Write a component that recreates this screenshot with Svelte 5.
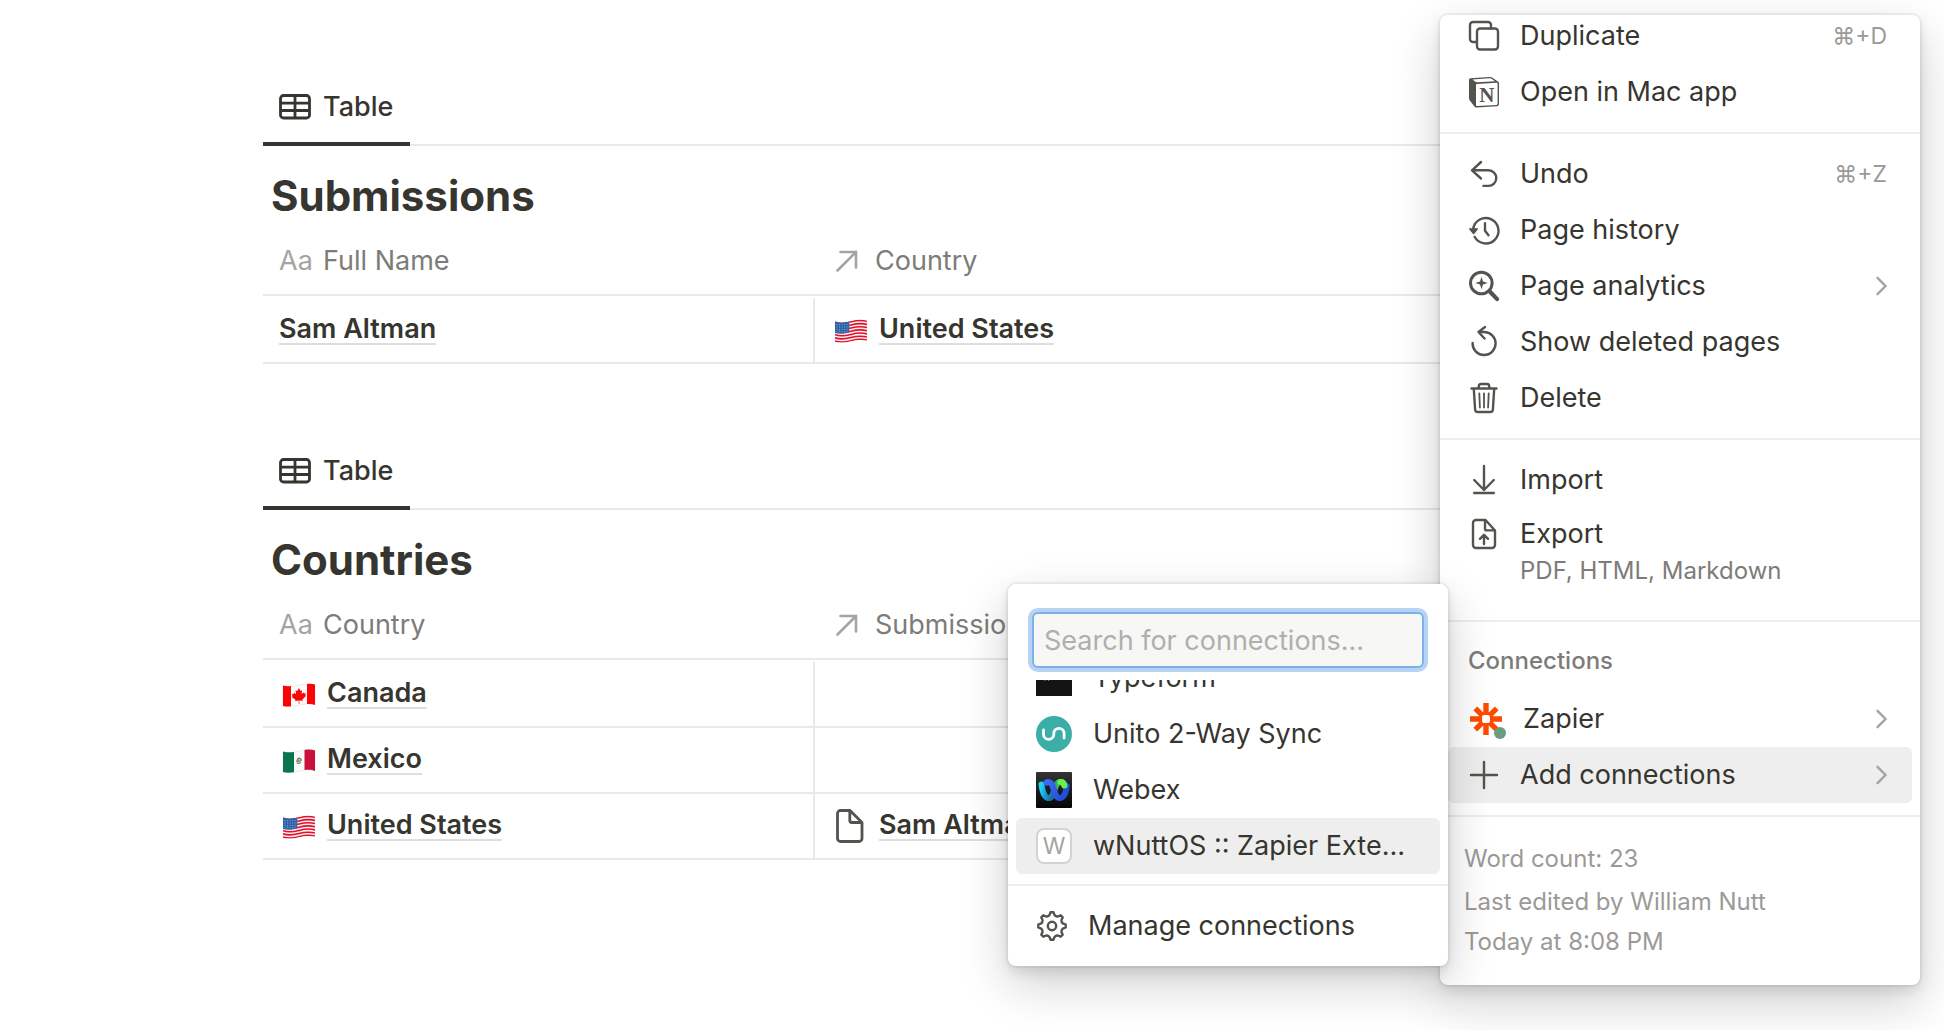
<script lang="ts">
  type Cell = { icon?: string; text: string };

  const sections: { title: string; columns: [string, string]; rows: { name: Cell; relation?: Cell }[] }[] = [
    {
      title: 'Submissions',
      columns: ['Full Name', 'Country'],
      rows: [{ name: { text: 'Sam Altman' }, relation: { icon: 'us', text: 'United States' } }]
    },
    {
      title: 'Countries',
      columns: ['Country', 'Submissions'],
      rows: [
        { name: { icon: 'ca', text: 'Canada' } },
        { name: { icon: 'mx', text: 'Mexico' } },
        { name: { icon: 'us', text: 'United States' }, relation: { icon: 'page', text: 'Sam Altman' } }
      ]
    }
  ];

  const groups: { icon: string; label: string; shortcut?: string; more?: boolean; note?: string }[][] = [
    [
      { icon: 'duplicate', label: 'Duplicate', shortcut: '⌘+D' },
      { icon: 'app', label: 'Open in Mac app' }
    ],
    [
      { icon: 'undo', label: 'Undo', shortcut: '⌘+Z' },
      { icon: 'history', label: 'Page history' },
      { icon: 'analytics', label: 'Page analytics', more: true },
      { icon: 'restore', label: 'Show deleted pages' },
      { icon: 'trash', label: 'Delete' }
    ],
    [
      { icon: 'import', label: 'Import' },
      { icon: 'export', label: 'Export', note: 'PDF, HTML, Markdown' }
    ]
  ];

  const apps = [
    { icon: 'typeform', label: 'Typeform' },
    { icon: 'unito', label: 'Unito 2-Way Sync' },
    { icon: 'webex', label: 'Webex' },
    { icon: 'letter', label: 'wNuttOS :: Zapier Extension' }
  ];

  let query = $state('');
  let selected = $state(3);

  const gear = (() => {
    const at = (r: number, deg: number) => {
      const a = (deg * Math.PI) / 180;
      return `${(15 + r * Math.sin(a)).toFixed(2)} ${(15 - r * Math.cos(a)).toFixed(2)}`;
    };
    let d = `M${at(13.8, -6)}`;
    for (let k = 0; k < 8; k++) {
      const c = k * 45;
      d += `L${at(13.8, c + 6)}L${at(11.2, c + 13)}Q${at(10, c + 22.5)} ${at(11.2, c + 32)}L${at(13.8, c + 39)}`;
    }
    return d + 'Z';
  })();
</script>

{#snippet flag(code: string)}
  <svg class="flag" viewBox="0 0 32 24" aria-hidden="true">
    {#if code === 'us'}
      <clipPath id="us-wave"><path d="M0 2.2C5 4 10 3.6 16 2S27 0 32 1.500V21.500C27 20.500 21 20.800 16 22.200S5 24 0 23Z" /></clipPath>
      <g clip-path="url(#us-wave)">
        <rect width="32" height="24" fill="#f6efef" />
        {#each [0, 1, 2, 3, 4, 5, 6] as i}
          <path d="M0 {3.100 + i * 3.150}C5 {4.800 + i * 3.150} 10 {4.400 + i * 3.150} 16 {2.800 + i * 3.150}S27 {0.900 + i * 3.150} 32 {2.300 + i * 3.150}" fill="none" stroke="#e3102c" stroke-width="1.600" />
        {/each}
        <path d="M0 2.200C5 4 9 3.500 14.200 2.300V13.500C9 14.500 5 15 0 14Z" fill="#2d64a8" />
        <path d="M1.500 5.500h12M1.500 8h12M1.500 10.500h12M1.500 12.700h11" stroke="#8fb2dc" stroke-width=".8" stroke-dasharray="1 1.500" />
      </g>
    {:else if code === 'ca'}
      <path d="M0 3C5 4.500 10 3.500 16 2S27 .500 32 1.500V21.500C27 20 21 21 16 22.200S5 24 0 23Z" fill="#fafafa" stroke="#ddd" stroke-width=".5" />
      <path d="M0 2.500C3 3.300 5.500 3.300 8 3V23.300C5 23.700 2.500 23.600 0 23ZM24 .900C27 .500 29.500.700 32 1.500V22C29 21 27 20.800 24 21Z" fill="#f90505" />
      <path d="m16 5-1.800 3-1.700-.5.600 3.800-2-1.600-.5 1.400-1.800-.1.800 2.200-.9.700 3.800 2.900-.4 1.300 3.600-.5.100 3.400h.6l-.1-3.500 3.500.3-.3-1.400 3.600-3.600-.9-.5.600-2.200-1.800.4-.6-1.200-1.700 1.900.3-3.900-1.500.8Z" fill="#f90505" />
    {:else}
      <path d="M0 3C5 4.500 10 3.500 16 2S27 .500 32 1.500V21.500C27 20 21 21 16 22.200S5 24 0 23Z" fill="#fafafa" stroke="#ddd" stroke-width=".5" />
      <path d="M0 2.500C4 3.500 7 3.500 11 3V23.200C7 23.800 3 23.800 0 23Z" fill="#0a7350" />
      <path d="M21.500 1C26 .200 29 .500 32 1.500V22C29 20.800 26 20.500 21.500 21.100Z" fill="#c8103a" />
      <path d="M14 13c0-2.500 1.200-4 2.700-3.600 1.300.4 1.500 1.500 1.100 2.600" fill="none" stroke="#9a6a3c" stroke-width="1.500" />
      <path d="M13.800 13.500c1.300 1.500 3.300 1 4-.8" fill="none" stroke="#3f9a78" stroke-width="1.200" />
      <circle cx="15.800" cy="12" r="1.200" fill="#5b9fc0" />
    {/if}
  </svg>
{/snippet}

{#snippet glyph(name: string)}
  <svg class="glyph" viewBox="0 0 30 30" aria-hidden="true">
    {#if name === 'duplicate'}
      <path d="M7.500 21H4a3 3 0 0 1-3-3V4a3 3 0 0 1 3-3h15a3 3 0 0 1 3 3v3.500" />
      <rect x="8" y="7.500" width="21" height="21" rx="3" />
    {:else if name === 'app'}
      <path class="solid" d="M1.500 1.300 20.500 0c1.500-.1 2 .100 3 .8l5 3.400c1.300.8 1.500 1.200 1.500 2.500v20c0 1.600-.7 2.500-2.300 2.600L8 30.500c-1.300.1-2-.2-2.800-1.200l-4-5.300C.300 23 0 22.200 0 21V3c0-1 .4-1.600 1.500-1.700Z" />
      <path class="hollow" d="m3.500 2.400 16.800-1.200c1 0 1.500 0 2.200.5L26 4.200 8.300 5.300c-1 0-1.600-.2-2.200-.7Z" />
      <path class="hollow" d="m8 7 19.500-1.200c.8 0 1.100.3 1.100 1.100v19.600c0 .9-.4 1.300-1.200 1.400L8.200 29c-.8 0-1.200-.3-1.200-1.100V8.100C7 7.400 7.300 7 8 7Z" />
      <text x="17.800" y="24.500" text-anchor="middle">N</text>
    {:else if name === 'undo'}
      <path d="M12 3 3 11.300l9 8.200M3 11.300h16.500a7.800 7.800 0 0 1 0 15.600h-5" />
    {:else if name === 'history'}
      <path d="M4.200 14a12.700 12.700 0 1 1 1.400 7.800" />
      <path d="M16 8.200v7.500l3.500 4.600" />
      <path class="solid" d="M.6 13.200h7.800c.6 0 .9.600.5 1.100L5.200 19c-.3.400-.9.400-1.200 0L.1 14.300c-.4-.5-.1-1.100.5-1.100Z" />
    {:else if name === 'analytics'}
      <circle class="thick" cx="12.300" cy="12" r="10.800" />
      <path class="handle" d="m20.800 20.500 7.300 7.600" />
      <path class="solid" d="m12.500 5.800 1.500 4.700 4.700 1.500-4.700 1.500-1.500 4.700-1.500-4.700L6.300 12l4.700-1.500Z" />
    {:else if name === 'restore'}
      <path d="M3.600 16A11.500 11.500 0 1 0 15 5H9.500M16 0 9.500 5l6 6.500" />
    {:else if name === 'trash'}
      <path d="M2.500 5.500h25M9.800 5.500V3.200c0-1.500.7-2.200 2.200-2.200h6c1.500 0 2.200.7 2.200 2.200v2.300M4.800 6l1.300 20.500c.1 1.700 1 2.500 2.500 2.500h12.800c1.500 0 2.400-.8 2.500-2.500L25.200 6" />
      <path class="thin" d="m10.300 10.300.6 14.200M15 10.300v14.200M19.700 10.300l-.6 14.200" />
    {:else if name === 'import'}
      <path d="M15 1v24M5.200 15 15 25l9.800-10M5.200 28h19.600" />
    {:else if name === 'export'}
      <path d="M16.500 1H7a3 3 0 0 0-3 3v22a3 3 0 0 0 3 3h16a3 3 0 0 0 3-3V11.500ZM16 1.500v8.300c0 1 .5 1.600 1.600 1.600H26" />
      <path d="M15 16v9M11 19.800l4-4 4 4" />
    {:else if name === 'plus'}
      <path d="M15 2v26M2 15h26" />
    {:else if name === 'gear'}
      <path d={gear} />
      <circle cx="15" cy="15" r="4.200" />
    {/if}
  </svg>
{/snippet}

{#snippet chevron()}
  <svg class="chevron" viewBox="0 0 11 20" aria-hidden="true"><path d="m1.500 1.800 8 8.200-8 8.200" /></svg>
{/snippet}

{#snippet cell(item: Cell)}
  <div class="entry" class:with-icon={item.icon}>
    {#if item.icon === 'page'}
      <svg class="page-icon" viewBox="0 0 32 34" aria-hidden="true">
        <path d="M15 1.500H5.500a3 3 0 0 0-3 3v25a3 3 0 0 0 3 3h18.500a3 3 0 0 0 3-3V13.500Z M14.800 2v9.500c0 1.300.6 2 2 2H27" />
      </svg>
    {:else if item.icon}
      {@render flag(item.icon)}
    {/if}
    <a href="#page">{item.text}</a>
  </div>
{/snippet}

<div class="page">
  <main>
    {#each sections as section}
      <section>
        <nav>
          <button class="tab">
            <svg viewBox="0 0 32 26" aria-hidden="true">
              <rect x="1.500" y="1.500" width="29" height="22.500" rx="3" />
              <path d="M2 9.200h28M2 16.500h28M16 2v22" />
            </svg>
            Table
          </button>
        </nav>
        <h2>{section.title}</h2>
        <table>
          <thead>
            <tr>
              <th class="name"><div class="head"><span class="aa">Aa</span>{section.columns[0]}</div></th>
              <th>
                <div class="head relation">
                  <svg viewBox="0 0 24 24" aria-hidden="true"><path d="M2.500 21.500 21 3M5.500 3H21v15.500" /></svg>
                  {section.columns[1]}
                </div>
              </th>
            </tr>
          </thead>
          <tbody>
            {#each section.rows as row}
              <tr>
                <td>{@render cell(row.name)}</td>
                <td>{#if row.relation}{@render cell(row.relation)}{/if}</td>
              </tr>
            {/each}
          </tbody>
        </table>
      </section>
    {/each}
  </main>

  <aside class="panel menu">
    {#each groups as group, g}
      <div class="group" class:scrolled={g === 0}>
        {#each group as item}
          <button class="item" class:tall={item.note}>
            {@render glyph(item.icon)}
            <span class="label">
              {item.label}
              {#if item.note}<small>{item.note}</small>{/if}
            </span>
            {#if item.shortcut}<kbd>{item.shortcut}</kbd>{/if}
            {#if item.more}{@render chevron()}{/if}
          </button>
        {/each}
      </div>
    {/each}
    <div class="group">
      <h3>Connections</h3>
      <button class="item zapier">
        <span class="badge">
          <svg viewBox="0 0 32 32" aria-hidden="true">
            <path d="M16 0v12M16 20v12M0 16h12M20 16h12M5.300 5.300l8 8M18.700 18.700l8 8M26.700 5.300l-8 8M13.300 18.700l-8 8" />
            <rect x="10.800" y="10.800" width="10.400" height="10.400" rx="3" />
          </svg>
          <span class="dot"></span>
        </span>
        <span class="label">Zapier</span>
        {@render chevron()}
      </button>
      <button class="item active">
        {@render glyph('plus')}
        <span class="label">Add connections</span>
        {@render chevron()}
      </button>
    </div>
    <footer>
      <p>Word count: 23</p>
      <p>Last edited by William Nutt<br />Today at 8:08 PM</p>
    </footer>
  </aside>

  <div class="panel submenu">
    <div class="search">
      <input type="text" aria-label="Search for connections" placeholder="Search for connections..." bind:value={query} />
    </div>
    <div class="list">
      {#each apps as app, i}
        <button class="item app" class:active={selected === i} onmouseenter={() => (selected = i)}>
          {#if app.icon === 'letter'}
            <span class="letter">W</span>
          {:else}
            <svg class="logo" viewBox="0 0 36 36" aria-hidden="true">
              {#if app.icon === 'typeform'}
                <rect width="36" height="36" fill="#141414" />
                <path d="M9 17.500v3.300M12.500 17.500v3.300" stroke="#999" stroke-width="1.200" />
              {:else if app.icon === 'unito'}
                <circle cx="18" cy="18" r="18" fill="#3baea7" />
                <path d="M7.500 14v4.200a5 5 0 0 0 10.300 0v-.7a5 5 0 0 1 10.300 0v4.500" fill="none" stroke="#fff" stroke-width="2.800" stroke-linecap="round" />
              {:else}
                <linearGradient id="wx-bg" x2="0" y2="1"><stop stop-color="#333" /><stop offset="1" stop-color="#050505" /></linearGradient>
                <linearGradient id="wx-left" x2="1" y2=".3"><stop stop-color="#1ed6f2" /><stop offset=".5" stop-color="#159ad8" /><stop offset="1" stop-color="#1f6b9d" /></linearGradient>
                <linearGradient id="wx-green" x2="1"><stop stop-color="#12705c" /><stop offset="1" stop-color="#65ef55" /></linearGradient>
                <linearGradient id="wx-blue" x2="1" y2=".4"><stop stop-color="#3c6cf5" /><stop offset="1" stop-color="#224ddb" /></linearGradient>
                <rect width="36" height="36" rx="1" fill="url(#wx-bg)" />
                <g fill="none" stroke-width="6" stroke-linecap="round">
                  <path d="M13 26c5 0 5.500-16 11-16 2.500 0 3.500 1.500 4.200 3.500" stroke="url(#wx-green)" />
                  <path d="M5.500 12.500C6.300 19 8.500 26 12.800 26c2.700 0 4.200-3 5.200-6.500" stroke="url(#wx-left)" />
                  <path d="M10.500 10.500c2-1 4.300-.5 5.700 2.500C18.500 18 19 26 23.700 26c4.300 0 6.300-5.500 7-12" stroke="url(#wx-blue)" />
                  <path d="M24.500 10c2.200-.2 3.500 1.500 4 3.500" stroke="#65ef55" />
                </g>
              {/if}
            </svg>
          {/if}
          <span class="label">{app.label}</span>
        </button>
      {/each}
    </div>
    <div class="group">
      <button class="item">
        {@render glyph('gear')}
        <span class="label">Manage connections</span>
      </button>
    </div>
  </div>
</div>

<style>
  :global(body) {
    margin: 0;
    background: #fff;
  }
  .page {
    position: relative;
    min-height: 100vh;
    overflow: hidden;
    box-sizing: border-box;
    color: #37352f;
    font-family: Inter, "Liberation Sans", sans-serif;
    font-size: 27px;
    line-height: 36px;
  }
  button,
  input,
  kbd {
    font: inherit;
    color: inherit;
  }
  button {
    border: 0;
    background: none;
    text-align: left;
    cursor: pointer;
  }
  svg {
    display: block;
    flex: none;
    overflow: visible;
  }

  main {
    padding: 72px 263px;
  }
  section + section {
    margin-top: 72px;
  }
  nav {
    display: flex;
    box-shadow: inset 0 -2px #e9e9e7;
  }
  .tab {
    display: flex;
    align-items: center;
    gap: 12px;
    height: 74px;
    padding: 0 17px 0 16px;
    border-bottom: 4px solid #37352f;
    font-weight: 500;
  }
  .tab svg {
    width: 32px;
    height: 26px;
    fill: none;
    stroke: #37352f;
    stroke-width: 2.8;
  }
  h2 {
    margin: 22px 8px 4px;
    font-size: 42px;
    line-height: 56px;
    font-weight: 700;
  }
  table {
    width: 100%;
    table-layout: fixed;
    border-collapse: separate;
    border-spacing: 0;
  }
  th,
  td {
    box-sizing: border-box;
    padding: 0;
    border-bottom: 2px solid #e9e9e7;
  }
  th {
    height: 68px;
    font-weight: 400;
    text-align: left;
  }
  .name {
    width: 552px;
  }
  tbody::before {
    content: "";
    display: block;
    height: 2px;
  }
  td {
    height: 66px;
  }
  td:first-child {
    border-right: 2px solid #e9e9e7;
  }
  .head {
    display: flex;
    align-items: center;
    gap: 12px;
    padding-left: 16px;
    color: #7d7c78;
  }
  .relation {
    gap: 16px;
    padding-left: 20px;
  }
  .relation svg {
    width: 24px;
    height: 24px;
    fill: none;
    stroke: #a5a4a1;
    stroke-width: 2.6;
    stroke-linecap: round;
  }
  .aa {
    width: 32px;
    color: #a5a4a1;
  }
  .entry {
    display: flex;
    align-items: center;
    gap: 12px;
    padding-left: 16px;
  }
  .with-icon {
    padding-left: 20px;
  }
  .entry a {
    border-bottom: 2px solid #dededc;
    color: inherit;
    font-weight: 600;
    line-height: 28px;
    text-decoration: none;
  }
  .flag {
    width: 32px;
    height: 24px;
    padding-top: 2px;
  }
  .page-icon {
    width: 32px;
    height: 34px;
    fill: none;
    stroke: #55534e;
    stroke-width: 2.8;
    stroke-linejoin: round;
  }

  .panel {
    position: absolute;
    box-sizing: border-box;
    overflow: hidden;
    border-radius: 8px;
    background: #fff;
    box-shadow:
      0 0 0 2px rgba(15, 15, 15, 0.05),
      0 6px 12px rgba(15, 15, 15, 0.1),
      0 18px 48px rgba(15, 15, 15, 0.2);
  }
  .menu {
    top: 15px;
    right: 24px;
    width: 480px;
  }
  .submenu {
    top: 584px;
    right: 496px;
    width: 440px;
  }
  .group {
    padding: 12px 8px;
  }
  .group + .group,
  .list + .group,
  footer {
    border-top: 2px solid #ededec;
  }
  .scrolled {
    margin-top: -19px;
  }
  .item {
    display: flex;
    align-items: center;
    gap: 21px;
    width: 100%;
    height: 56px;
    padding: 0 25px 0 21px;
    border-radius: 6px;
  }
  .active {
    background: #eee;
  }
  .label {
    flex: 1;
    min-width: 0;
    overflow: hidden;
    white-space: nowrap;
    text-overflow: ellipsis;
  }
  .tall {
    align-items: flex-start;
    height: 100px;
    padding-top: 8px;
  }
  .tall .glyph {
    margin-top: 3px;
  }
  small {
    display: block;
    color: #7d7c78;
    font-size: 24px;
    line-height: 38px;
  }
  kbd {
    color: #9b9a97;
    font-size: 23px;
  }
  .glyph {
    width: 30px;
    height: 30px;
    fill: none;
    stroke: #55534e;
    stroke-width: 2.4;
    stroke-linecap: round;
    stroke-linejoin: round;
  }
  .glyph .thin {
    stroke-width: 1.8;
  }
  .glyph .thick {
    stroke-width: 3;
  }
  .glyph .handle {
    stroke-width: 4.2;
  }
  .glyph .solid {
    fill: #55534e;
    stroke: none;
  }
  .glyph .hollow {
    fill: #fff;
    stroke: none;
  }
  .glyph text {
    fill: #55534e;
    stroke: none;
    font: 700 21px "Liberation Serif", serif;
  }
  .chevron {
    width: 11px;
    height: 20px;
    fill: none;
    stroke: #a5a4a1;
    stroke-width: 2.4;
    stroke-linecap: round;
  }
  h3 {
    margin: 0;
    padding: 9px 20px 12px;
    color: #7d7c78;
    font-size: 24px;
    line-height: 36px;
    font-weight: 500;
  }
  .zapier {
    padding-left: 22px;
  }
  .badge {
    position: relative;
  }
  .badge svg {
    width: 32px;
    height: 32px;
    fill: #fff;
    stroke: #ff4a00;
  }
  .badge path {
    stroke-width: 5.4;
  }
  .badge rect {
    stroke-width: 2.6;
  }
  .dot {
    position: absolute;
    right: -4px;
    bottom: -4px;
    width: 12px;
    height: 12px;
    border-radius: 50%;
    background: #6c9b7d;
  }
  footer {
    padding: 22px 24px 20px;
    color: #9b9a97;
    font-size: 24px;
    line-height: 40px;
  }
  footer p {
    margin: 0 0 3px;
  }

  .search {
    padding: 28px 24px 12px;
  }
  input {
    display: block;
    box-sizing: border-box;
    width: 100%;
    height: 56px;
    padding: 0 10px;
    border: 2px solid #7fb0ea;
    border-radius: 6px;
    outline: none;
    background: #f7f7f5;
    box-shadow: 0 0 0 4px #b5d3f5;
  }
  input::placeholder {
    color: #b0afad;
    opacity: 1;
  }
  .list {
    display: flex;
    flex-direction: column;
    justify-content: flex-end;
    height: 204px;
    padding: 0 8px 10px;
    box-sizing: border-box;
    overflow: hidden;
  }
  .app {
    flex: none;
    padding: 0 24px 0 20px;
  }
  .logo {
    width: 36px;
    height: 36px;
  }
  .letter {
    flex: none;
    box-sizing: border-box;
    width: 36px;
    height: 36px;
    border: 2px solid #d3d3d1;
    border-radius: 8px;
    background: #fff;
    color: #a5a4a1;
    font-size: 23px;
    line-height: 32px;
    text-align: center;
  }
</style>
